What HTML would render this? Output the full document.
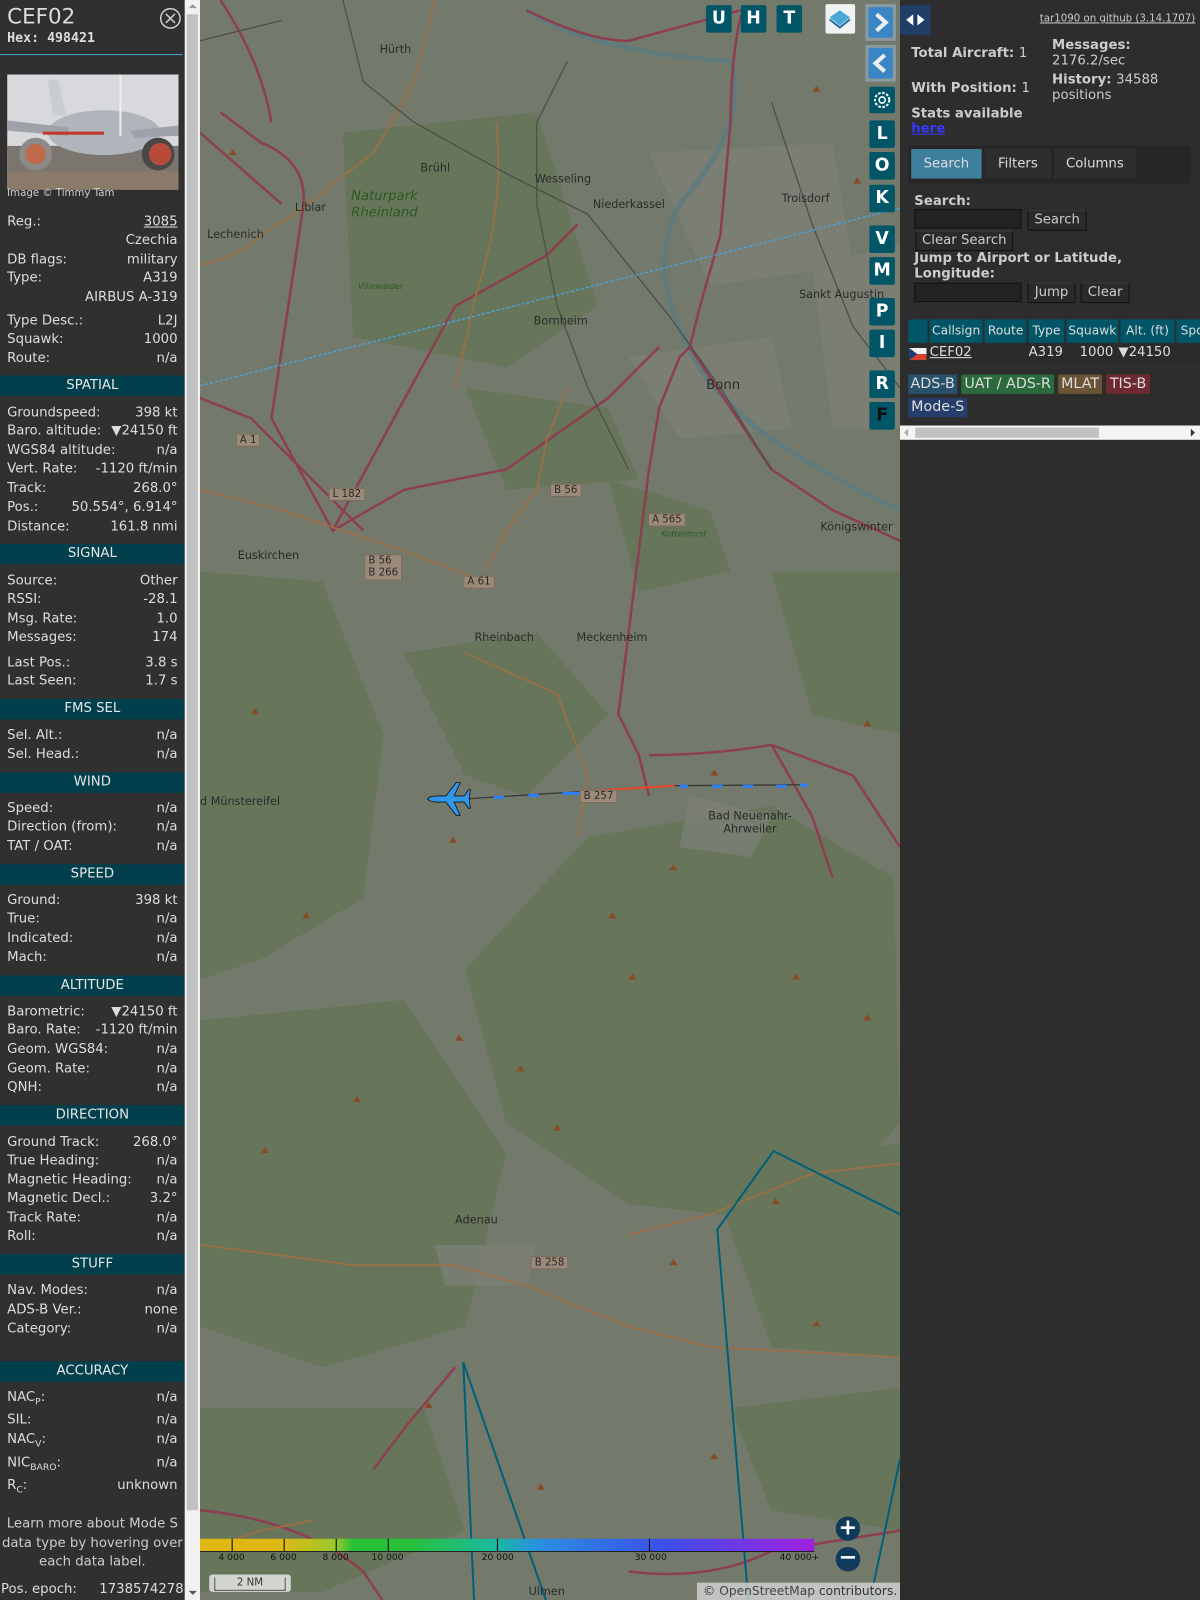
<!DOCTYPE html>
<html><head><meta charset="utf-8">
<style>
*{margin:0;padding:0;box-sizing:border-box}
body{width:1200px;height:1600px;overflow:hidden;background:#2e2e2e;font-family:"DejaVu Sans","Liberation Sans",sans-serif;color:#ddd;position:relative}
#w{position:absolute;left:0;top:0;width:1176px;height:1568px;transform:scale(1.020408);transform-origin:0 0}
.lp{position:absolute;left:0;top:0;width:181px;height:1568px;background:#303030}
.r{position:absolute;left:7px;width:167px;height:18px;line-height:18px;font-size:13px;color:#ddd;white-space:nowrap}
.r .v{position:absolute;right:0;top:0}
.h{position:absolute;left:0;width:181px;height:20px;line-height:20px;background:#003f4b;text-align:center;font-size:13px;color:#e6e6e6}
.sb{position:absolute;left:181px;top:0;width:15px;height:1568px;background:#f1f1f1}
.map{position:absolute;left:196px;top:0;width:686px;height:1568px;background:#737a6b;overflow:hidden}
.btn{position:absolute;width:25px;height:27px;background:#005566;border-radius:2px;color:#fff;font-weight:bold;font-size:17px;text-align:center;line-height:27px}
.rp{position:absolute;left:882px;top:0;width:294px;height:1568px;background:#2d2d2d;overflow:hidden}
.b{font-weight:bold;font-size:13px;color:#ccc;position:absolute}
.inp{position:absolute;background:#232323;border:1px solid #111;height:19px}
.pb{position:absolute;background:#2a2a2a;border:1px solid #111;border-top-color:#3a3a3a;height:20px;font-size:13px;line-height:18px;color:#ccc;text-align:center}
.th{position:absolute;top:313px;height:23px;background:#005566;color:#ddd;font-size:12px;line-height:23px;text-align:center}
.tag{position:absolute;height:19px;line-height:19px;font-size:14px;color:#ddd;text-align:center;white-space:nowrap}
.ml{position:absolute;font-size:11px;color:#2a2a2a;white-space:nowrap}
</style></head><body>
<div id="w">
<div class="lp">
  <div style="position:absolute;left:7px;top:4px;font-size:21px;color:#ddd">CEF02</div>
  <div style="position:absolute;left:7px;top:30px;font-size:13px;font-weight:bold;color:#ddd;font-family:'DejaVu Sans Mono','Liberation Mono',monospace">Hex: 498421</div>
  <svg style="position:absolute;left:156px;top:7px" width="22" height="22"><circle cx="11" cy="11" r="9.5" fill="none" stroke="#ccc" stroke-width="1.5"/><path d="M6.5 6.5L15.5 15.5M15.5 6.5L6.5 15.5" stroke="#ccc" stroke-width="1.5"/></svg>
  <div style="position:absolute;left:0;top:53px;width:179px;height:1px;background:#3fa9d6"></div>
  <svg style="position:absolute;left:7px;top:73px" width="168" height="113">
    <rect width="168" height="113" fill="#d8d9dc"/>
    <rect y="70" width="168" height="43" fill="#7b7570"/>
    <rect y="95" width="168" height="18" fill="#8a7a6a"/>
    <path d="M40 5L50 5L58 40L45 40Z" fill="#c9ccd2"/>
    <ellipse cx="95" cy="57" rx="55" ry="22" fill="#b0b4bb"/>
    <path d="M0 45L60 52L60 60L0 55Z" fill="#9ea2a8"/>
    <path d="M120 55L168 50L168 60L125 62Z" fill="#9ea2a8"/>
    <rect x="35" y="56" width="60" height="3" fill="#c0392b"/>
    <circle cx="28" cy="78" r="16" fill="#8d8b8a"/><circle cx="28" cy="78" r="10" fill="#c06a4a"/>
    <circle cx="148" cy="78" r="16" fill="#4a4748"/><circle cx="150" cy="78" r="11" fill="#b84a3a"/>
    <rect x="110" y="0" width="2" height="60" fill="#eee"/>
  </svg>
  <div style="position:absolute;left:7px;top:184px;font-size:10px;color:#ccc">Image © Timmy Tam</div>

  <div class="r" style="top:209px">Reg.:<span class="v" style="text-decoration:underline">3085</span></div>
  <div class="r" style="top:227px"><span class="v">Czechia</span></div>
  <div class="r" style="top:246px">DB flags:<span class="v">military</span></div>
  <div class="r" style="top:264px">Type:<span class="v">A319</span></div>
  <div class="r" style="top:283px"><span class="v">AIRBUS A-319</span></div>
  <div class="r" style="top:306px">Type Desc.:<span class="v">L2J</span></div>
  <div class="r" style="top:324px">Squawk:<span class="v">1000</span></div>
  <div class="r" style="top:343px">Route:<span class="v">n/a</span></div>
  <div class="h" style="top:368px">SPATIAL</div>
  <div class="r" style="top:396px">Groundspeed:<span class="v">398 kt</span></div>
  <div class="r" style="top:414px">Baro. altitude:<span class="v">▼24150 ft</span></div>
  <div class="r" style="top:433px">WGS84 altitude:<span class="v">n/a</span></div>
  <div class="r" style="top:451px">Vert. Rate:<span class="v">-1120 ft/min</span></div>
  <div class="r" style="top:470px">Track:<span class="v">268.0°</span></div>
  <div class="r" style="top:489px">Pos.:<span class="v">50.554°, 6.914°</span></div>
  <div class="r" style="top:508px">Distance:<span class="v">161.8 nmi</span></div>
  <div class="h" style="top:533px">SIGNAL</div>
  <div class="r" style="top:561px">Source:<span class="v">Other</span></div>
  <div class="r" style="top:579px">RSSI:<span class="v">-28.1</span></div>
  <div class="r" style="top:598px">Msg. Rate:<span class="v">1.0</span></div>
  <div class="r" style="top:616px">Messages:<span class="v">174</span></div>
  <div class="r" style="top:641px">Last Pos.:<span class="v">3.8 s</span></div>
  <div class="r" style="top:659px">Last Seen:<span class="v">1.7 s</span></div>
  <div class="h" style="top:685px">FMS SEL</div>
  <div class="r" style="top:712px">Sel. Alt.:<span class="v">n/a</span></div>
  <div class="r" style="top:731px">Sel. Head.:<span class="v">n/a</span></div>
  <div class="h" style="top:757px">WIND</div>
  <div class="r" style="top:784px">Speed:<span class="v">n/a</span></div>
  <div class="r" style="top:802px">Direction (from):<span class="v">n/a</span></div>
  <div class="r" style="top:821px">TAT / OAT:<span class="v">n/a</span></div>
  <div class="h" style="top:847px">SPEED</div>
  <div class="r" style="top:874px">Ground:<span class="v">398 kt</span></div>
  <div class="r" style="top:892px">True:<span class="v">n/a</span></div>
  <div class="r" style="top:911px">Indicated:<span class="v">n/a</span></div>
  <div class="r" style="top:930px">Mach:<span class="v">n/a</span></div>
  <div class="h" style="top:956px">ALTITUDE</div>
  <div class="r" style="top:983px">Barometric:<span class="v">▼24150 ft</span></div>
  <div class="r" style="top:1001px">Baro. Rate:<span class="v">-1120 ft/min</span></div>
  <div class="r" style="top:1020px">Geom. WGS84:<span class="v">n/a</span></div>
  <div class="r" style="top:1039px">Geom. Rate:<span class="v">n/a</span></div>
  <div class="r" style="top:1057px">QNH:<span class="v">n/a</span></div>
  <div class="h" style="top:1083px">DIRECTION</div>
  <div class="r" style="top:1111px">Ground Track:<span class="v">268.0°</span></div>
  <div class="r" style="top:1129px">True Heading:<span class="v">n/a</span></div>
  <div class="r" style="top:1148px">Magnetic Heading:<span class="v">n/a</span></div>
  <div class="r" style="top:1166px">Magnetic Decl.:<span class="v">3.2°</span></div>
  <div class="r" style="top:1185px">Track Rate:<span class="v">n/a</span></div>
  <div class="r" style="top:1203px">Roll:<span class="v">n/a</span></div>
  <div class="h" style="top:1229px">STUFF</div>
  <div class="r" style="top:1256px">Nav. Modes:<span class="v">n/a</span></div>
  <div class="r" style="top:1275px">ADS-B Ver.:<span class="v">none</span></div>
  <div class="r" style="top:1294px">Category:<span class="v">n/a</span></div>
  <div class="h" style="top:1334px">ACCURACY</div>
  <div class="r" style="top:1361px">NAC<sub style="font-size:9px">P</sub>:<span class="v">n/a</span></div>
  <div class="r" style="top:1383px">SIL:<span class="v">n/a</span></div>
  <div class="r" style="top:1402px">NAC<sub style="font-size:9px">V</sub>:<span class="v">n/a</span></div>
  <div class="r" style="top:1425px">NIC<sub style="font-size:9px">BARO</sub>:<span class="v">n/a</span></div>
  <div class="r" style="top:1447px">R<sub style="font-size:9px">C</sub>:<span class="v">unknown</span></div>
  <div style="position:absolute;left:0;top:1485px;width:181px;text-align:center;font-size:13px;line-height:18.5px;color:#ccc">Learn more about Mode S data type by hovering over each data label.</div>
  <div class="r" style="top:1549px;left:1px;width:179px">Pos. epoch:<span class="v">1738574278</span></div>
</div>
<div class="sb">
  <div style="position:absolute;left:2px;top:14px;width:11px;height:1466px;background:#c1c1c1"></div>
  <div style="position:absolute;left:4px;top:4px;width:0;height:0;border-left:4px solid transparent;border-right:4px solid transparent;border-bottom:4px solid #999"></div>
  <div style="position:absolute;left:4px;top:1559px;width:0;height:0;border-left:4px solid transparent;border-right:4px solid transparent;border-top:4px solid #555"></div>
</div>

<div class="map">
<svg width="686" height="1568" style="position:absolute;left:0;top:0">
  <g fill="#66755a" opacity="0.9">
    <path d="M140 130L330 110L390 300L300 360L150 330Z"/>
    <path d="M200 640L330 620L400 700L320 780L260 760L230 700Z"/>
    <path d="M400 470L500 500L520 560L430 580Z"/>
    <path d="M0 560L120 570L180 720L160 880L60 940L0 960Z"/>
    <path d="M380 820L560 790L680 860L686 1100L600 1200L420 1180L300 1100L260 950Z"/>
    <path d="M0 1000L200 980L300 1130L260 1300L120 1340L0 1300Z"/>
    <path d="M500 1150L686 1120L686 1330L560 1320Z"/>
    <path d="M0 1380L220 1380L260 1500L120 1560L0 1560Z"/>
    <path d="M520 1380L686 1360L686 1500L560 1480Z"/>
    <path d="M260 380L400 400L430 470L300 480Z"/>
    <path d="M560 560L686 560L686 720L600 700Z"/>
  </g>
  <g fill="#7c7f76" opacity="0.8">
    <path d="M440 150L620 140L640 260L500 280Z"/>
    <path d="M420 350L560 330L580 420L470 430Z"/>
    <path d="M600 260L686 240L686 420L620 420Z"/>
    <path d="M480 780L560 800L540 840L470 830Z"/>
    <path d="M230 1220L330 1220L320 1260L240 1260Z"/>
  </g>
  <path d="M320 10Q380 50 520 60Q540 120 470 200Q440 260 470 320Q490 380 560 430Q620 470 686 500" stroke="#5d7a80" stroke-width="5" fill="none" opacity="0.8"/>
  <g stroke="#8d3f52" stroke-width="2.5" fill="none">
    <path d="M20 110L60 140Q110 160 100 210L70 410"/>
    <path d="M20 0Q60 60 70 120"/>
    <path d="M0 130L80 200"/>
    <path d="M0 390L50 410L100 460L160 520"/>
    <path d="M320 10Q380 40 420 40L530 10"/>
    <path d="M530 15Q520 60 520 120L510 230L490 300L480 340L520 400L560 460L620 500L686 530"/>
    <path d="M70 410L130 520L250 300L340 250L370 220"/>
    <path d="M130 520L200 480L300 460L400 390L450 340"/>
    <path d="M480 340L470 350L450 400L440 460L430 540L420 620L410 700L420 720L430 740L440 780"/>
    <path d="M440 740Q500 740 560 730L640 760L686 830"/>
    <path d="M560 730L600 800L620 860"/>
    <path d="M0 1480Q100 1490 160 1540L200 1600"/>
    <path d="M420 1540Q500 1550 560 1520L686 1500"/>
    <path d="M250 1340L200 1400L170 1440"/>
  </g>
  <g stroke="#a06f44" stroke-width="1.6" fill="none">
    <path d="M0 260Q40 250 60 230Q110 200 130 180L170 150L210 80L230 0"/>
    <path d="M290 120Q300 200 270 290L250 380"/>
    <path d="M360 380L340 430L330 480L300 520L280 560"/>
    <path d="M0 480L80 500Q140 520 200 540L280 570"/>
    <path d="M260 640L350 680L380 760L370 820"/>
    <path d="M0 1220Q80 1230 150 1240L250 1240L320 1260L420 1300L500 1320L686 1330"/>
    <path d="M420 1210L500 1190L600 1150L686 1140"/>
    <path d="M0 1520L60 1500L110 1490"/>
  </g>
  <g stroke="#4b4d48" stroke-width="1.2" fill="none">
    <path d="M140 0L160 80L210 120L300 170L380 210L460 310L510 380L560 460"/>
    <path d="M0 40L80 20"/>
    <path d="M360 60L330 120L330 200L350 300L380 380L420 460"/>
    <path d="M560 100L600 220L640 320L686 380"/>
  </g>
  <path d="M0 378L686 204" stroke="#3fa9f5" stroke-width="1.2" stroke-dasharray="3 2" fill="none"/>
  <g stroke="#00607a" stroke-width="2" fill="none">
    <path d="M686 1190L562 1128L507 1205L540 1600"/>
    <path d="M258 1335L350 1600"/>
    <path d="M258 1335L270 1600"/>
    <path d="M686 1430L650 1600"/>
  </g>
  <path d="M243 784L385 775" stroke="#3a3a3a" stroke-width="1.3"/>
  <path d="M385 775L465 770" stroke="#e8452a" stroke-width="2"/>
  <path d="M465 770L595 769" stroke="#3a3a3a" stroke-width="1.3"/>
  <g fill="#2a7fff"><rect x="288" y="780" width="10" height="3"/><rect x="322" y="778" width="10" height="3"/><rect x="355" y="776" width="30" height="3"/><rect x="470" y="769" width="8" height="3"/><rect x="502" y="769" width="10" height="3"/><rect x="532" y="769" width="10" height="3"/><rect x="565" y="769" width="10" height="3"/><rect x="588" y="768" width="8" height="3"/></g>
  <g transform="translate(245,783)" fill="#2f96e8" stroke="#111" stroke-width="0.8">
    <path d="M-22 0Q-20 -3 -12 -3L-4 -3L6 -16L10 -16L4 -3L14 -3L18 -9L20 -9L19 -2L19 2L20 9L18 9L14 3L4 3L10 16L6 16L-4 3L-12 3Q-20 3 -22 0Z"/>
  </g>
  <g fill="#8a4a26">
    <path d="M28 152l4 -6l4 6z"/><path d="M244 826l4 -6l4 6z"/><path d="M346 1108l4 -6l4 6z"/>
    <path d="M460 853l4 -6l4 6z"/><path d="M500 760l4 -6l4 6z"/><path d="M650 712l4 -6l4 6z"/>
    <path d="M150 1080l4 -6l4 6z"/><path d="M250 1020l4 -6l4 6z"/><path d="M310 1050l4 -6l4 6z"/>
    <path d="M400 900l4 -6l4 6z"/><path d="M420 960l4 -6l4 6z"/><path d="M560 1180l4 -6l4 6z"/>
    <path d="M460 1240l4 -6l4 6z"/><path d="M600 1300l4 -6l4 6z"/><path d="M220 1380l4 -6l4 6z"/>
    <path d="M100 900l4 -6l4 6z"/><path d="M60 1130l4 -6l4 6z"/><path d="M50 700l4 -6l4 6z"/>
    <path d="M330 1460l4 -6l4 6z"/><path d="M500 1430l4 -6l4 6z"/><path d="M650 1000l4 -6l4 6z"/>
    <path d="M640 180l4 -6l4 6z"/><path d="M600 90l4 -6l4 6z"/><path d="M580 960l4 -6l4 6z"/>
  </g>
</svg>
  <div class="ml" style="left:176px;top:42px">Hürth</div>
  <div class="ml" style="left:93px;top:197px">Liblar</div>
  <div class="ml" style="left:7px;top:223px">Lechenich</div>
  <div class="ml" style="left:216px;top:158px">Brühl</div>
  <div class="ml" style="left:328px;top:169px">Wesseling</div>
  <div class="ml" style="left:385px;top:194px">Niederkassel</div>
  <div class="ml" style="left:327px;top:308px">Bornheim</div>
  <div class="ml" style="left:570px;top:188px">Troisdorf</div>
  <div class="ml" style="left:587px;top:282px">Sankt Augustin</div>
  <div class="ml" style="left:496px;top:370px;font-size:13px">Bonn</div>
  <div class="ml" style="left:37px;top:538px">Euskirchen</div>
  <div class="ml" style="left:269px;top:618px">Rheinbach</div>
  <div class="ml" style="left:369px;top:618px">Meckenheim</div>
  <div class="ml" style="left:0px;top:779px">d Münstereifel</div>
  <div class="ml" style="left:498px;top:793px;text-align:center">Bad Neuenahr-<br>Ahrweiler</div>
  <div class="ml" style="left:608px;top:510px">Königswinter</div>
  <div class="ml" style="left:250px;top:1189px">Adenau</div>
  <div class="ml" style="left:322px;top:1553px">Ulmen</div>
  <div class="ml" style="left:148px;top:185px;color:#2a5a22;font-size:13px;font-style:italic;text-align:center;line-height:16px">Naturpark<br>Rheinland</div>
  <div class="ml" style="left:155px;top:276px;color:#2a5a22;font-size:8px;font-style:italic">Villewälder</div>
  <div class="ml" style="left:452px;top:519px;color:#2a5a22;font-size:8px;font-style:italic">Kottenforst</div>
  <div class="ml" style="left:35px;top:425px;background:#9b8a79;border:1px solid #7a6a5a;padding:0 3px;font-size:10px">A 1</div>
  <div class="ml" style="left:126px;top:478px;background:#9b8a79;border:1px solid #7a6a5a;padding:0 3px;font-size:10px">L 182</div>
  <div class="ml" style="left:343px;top:474px;background:#9b8a79;border:1px solid #7a6a5a;padding:0 3px;font-size:10px">B 56</div>
  <div class="ml" style="left:439px;top:503px;background:#9b8a79;border:1px solid #7a6a5a;padding:0 3px;font-size:10px">A 565</div>
  <div class="ml" style="left:161px;top:543px;background:#9b8a79;border:1px solid #7a6a5a;padding:0 3px;font-size:10px;line-height:12px">B 56<br>B 266</div>
  <div class="ml" style="left:258px;top:564px;background:#9b8a79;border:1px solid #7a6a5a;padding:0 3px;font-size:10px">A 61</div>
  <div class="ml" style="left:372px;top:774px;background:#9b8a79;border:1px solid #7a6a5a;padding:0 3px;font-size:10px">B 257</div>
  <div class="ml" style="left:324px;top:1231px;background:#9b8a79;border:1px solid #7a6a5a;padding:0 3px;font-size:10px">B 258</div>

  <div style="position:absolute;left:0;top:1508px;width:602px;height:12px;background:linear-gradient(90deg,#e0b814 0%,#e0b814 13%,#9ac82a 22%,#28c038 25%,#28c038 34%,#1abaa0 48%,#2a90e0 55%,#3a50e8 75%,#a020e0 100%)"></div>
  <div style="position:absolute;left:0;top:1520px;width:602px;height:1px;background:#222"></div>
  <div style="position:absolute;left:31px;top:1508px;width:1px;height:12px;background:#000"></div>
  <div style="position:absolute;left:82px;top:1508px;width:1px;height:12px;background:#000"></div>
  <div style="position:absolute;left:133px;top:1508px;width:1px;height:12px;background:#000"></div>
  <div style="position:absolute;left:184px;top:1508px;width:1px;height:12px;background:#000"></div>
  <div style="position:absolute;left:291px;top:1508px;width:1px;height:12px;background:#000"></div>
  <div style="position:absolute;left:440px;top:1508px;width:1px;height:12px;background:#000"></div>
  <div class="ml" style="left:18px;top:1522px;font-size:9px;color:#111">4 000</div>
  <div class="ml" style="left:69px;top:1522px;font-size:9px;color:#111">6 000</div>
  <div class="ml" style="left:120px;top:1522px;font-size:9px;color:#111">8 000</div>
  <div class="ml" style="left:168px;top:1522px;font-size:9px;color:#111">10 000</div>
  <div class="ml" style="left:276px;top:1522px;font-size:9px;color:#111">20 000</div>
  <div class="ml" style="left:426px;top:1522px;font-size:9px;color:#111">30 000</div>
  <div class="ml" style="left:568px;top:1522px;font-size:9px;color:#111">40 000+</div>
  <div style="position:absolute;left:9px;top:1543px;width:80px;height:17px;background:rgba(230,230,230,0.85);border-radius:3px;font-size:10px;color:#333;text-align:center;line-height:17px"><span style="display:inline-block;border:1px solid #555;border-top:none;width:70px;line-height:12px">2 NM</span></div>
  <div style="position:absolute;left:623px;top:1486px;width:24px;height:24px;border-radius:50%;background:#0f3a5a;color:#fff;font-size:22px;line-height:23px;text-align:center;font-weight:bold">+</div>
  <div style="position:absolute;left:623px;top:1516px;width:24px;height:24px;border-radius:50%;background:#0f3a5a;color:#fff;font-size:22px;line-height:22px;text-align:center;font-weight:bold">−</div>
  <div style="position:absolute;left:487px;top:1551px;width:199px;height:17px;background:rgba(220,220,220,0.75);font-size:12px;color:#333;line-height:17px;padding-left:6px">© <span style="color:#444">OpenStreetMap</span> contributors.</div>

  <div class="btn" style="left:496px;top:5px">U</div>
  <div class="btn" style="left:530px;top:5px">H</div>
  <div class="btn" style="left:565px;top:5px">T</div>
  <div style="position:absolute;left:613px;top:4px;width:29px;height:29px;background:#f2f2f2;border-radius:2px"><svg width="29" height="29"><path d="M14 6L24 13L14 21L4 13Z" fill="#4aa8d6"/><path d="M4 15L14 23L24 15" fill="none" stroke="#2a6ea0" stroke-width="2"/></svg></div>
  <div style="position:absolute;left:652px;top:4px;width:30px;height:36px;background:#8a9aa0;padding:3px"><div style="width:24px;height:30px;background:#3a86c4;border-radius:2px"><svg width="24" height="30"><path d="M8 7L17 15L8 23" stroke="#eee" stroke-width="4" fill="none"/></svg></div></div>
  <div style="position:absolute;left:652px;top:44px;width:30px;height:36px;background:#8a9aa0;padding:3px"><div style="width:24px;height:30px;background:#3a86c4;border-radius:2px"><svg width="24" height="30"><path d="M16 7L7 15L16 23" stroke="#eee" stroke-width="4" fill="none"/></svg></div></div>
  <div class="btn" style="left:656px;top:85px;height:26px"><svg width="25" height="26"><circle cx="12.5" cy="13" r="3" fill="none" stroke="#fff" stroke-width="1.5"/><circle cx="12.5" cy="13" r="7" fill="none" stroke="#fff" stroke-width="2" stroke-dasharray="2.5 1.6"/></svg></div>
  <div class="btn" style="left:656px;top:118px">L</div>
  <div class="btn" style="left:656px;top:149px">O</div>
  <div class="btn" style="left:656px;top:181px">K</div>
  <div class="btn" style="left:656px;top:221px">V</div>
  <div class="btn" style="left:656px;top:252px">M</div>
  <div class="btn" style="left:656px;top:292px">P</div>
  <div class="btn" style="left:656px;top:323px">I</div>
  <div class="btn" style="left:656px;top:363px">R</div>
  <div class="btn" style="left:656px;top:394px;color:#111">F</div>
</div>

<div class="rp">
  <div style="position:absolute;left:0;top:5px;width:30px;height:29px;background:#1f3d66"><svg width="30" height="29"><path d="M6 14.5L13 9L13 20Z" fill="#fff"/><path d="M24 14.5L17 9L17 20Z" fill="#fff"/></svg></div>
  <div style="position:absolute;left:137px;top:13px;font-size:10px;color:#ccc;text-decoration:underline;white-space:nowrap">tar1090 on github (3.14.1707)</div>
  <div class="b" style="left:11px;top:45px">Total Aircraft: <span style="font-weight:normal">1</span></div>
  <div class="b" style="left:11px;top:79px">With Position: <span style="font-weight:normal">1</span></div>
  <div class="b" style="left:11px;top:104px;line-height:15px">Stats available<br><span style="color:#3838ff;text-decoration:underline">here</span></div>
  <div class="b" style="left:149px;top:37px;line-height:15px">Messages:<br><span style="font-weight:normal">2176.2/sec</span></div>
  <div class="b" style="left:149px;top:71px;line-height:15px">History: <span style="font-weight:normal">34588<br>positions</span></div>
  <div style="position:absolute;left:8px;top:143px;width:277px;height:37px;background:#262626"></div>
  <div style="position:absolute;left:11px;top:146px;width:69px;height:29px;background:#3f7f9e;font-size:13px;line-height:29px;text-align:center;color:#ddd">Search</div>
  <div style="position:absolute;left:83px;top:146px;width:65px;height:29px;background:#2e2e2e;font-size:13px;line-height:29px;text-align:center;color:#ddd">Filters</div>
  <div style="position:absolute;left:151px;top:146px;width:80px;height:29px;background:#2e2e2e;font-size:13px;line-height:29px;text-align:center;color:#ddd">Columns</div>
  <div class="b" style="left:14px;top:190px">Search:</div>
  <div class="inp" style="left:14px;top:205px;width:105px"></div>
  <div class="pb" style="left:125px;top:206px;width:58px">Search</div>
  <div class="pb" style="left:15px;top:226px;width:96px">Clear Search</div>
  <div class="b" style="left:14px;top:246px;line-height:15px">Jump to Airport or Latitude,<br>Longitude:</div>
  <div class="inp" style="left:14px;top:277px;width:105px"></div>
  <div class="pb" style="left:125px;top:277px;width:47px">Jump</div>
  <div class="pb" style="left:177px;top:277px;width:48px">Clear</div>
  <div class="th" style="left:8px;width:19px"></div>
  <div class="th" style="left:29px;width:52px">Callsign</div>
  <div class="th" style="left:83px;width:41px">Route</div>
  <div class="th" style="left:126px;width:35px">Type</div>
  <div class="th" style="left:163px;width:51px">Squawk</div>
  <div class="th" style="left:216px;width:53px">Alt. (ft)</div>
  <div class="th" style="left:271px;width:47px;text-align:left;padding-left:4px">Spd</div>
  <div style="position:absolute;left:8px;top:337px;width:310px;height:19px;background:#2b2b2b"></div>
  <svg style="position:absolute;left:9px;top:341px" width="17" height="12"><rect width="17" height="6" fill="#f2f2f2"/><rect y="6" width="17" height="6" fill="#d7412c"/><path d="M0 0L8 6L0 12Z" fill="#1a3a7a"/></svg>
  <div style="position:absolute;left:29px;top:338px;font-size:13px;color:#ddd;text-decoration:underline">CEF02</div>
  <div style="position:absolute;left:126px;top:338px;font-size:13px;color:#ddd">A319</div>
  <div style="position:absolute;left:176px;top:338px;font-size:13px;color:#ddd">1000</div>
  <div style="position:absolute;left:214px;top:338px;font-size:13px;color:#ddd">▼24150</div>
  <div class="tag" style="left:8px;top:367px;width:48px;background:#27506a">ADS-B</div>
  <div class="tag" style="left:60px;top:367px;width:91px;background:#2b6a3c">UAT / ADS-R</div>
  <div class="tag" style="left:155px;top:367px;width:43px;background:#6b5436">MLAT</div>
  <div class="tag" style="left:202px;top:367px;width:43px;background:#6e2a30">TIS-B</div>
  <div class="tag" style="left:8px;top:390px;width:58px;background:#263e6c">Mode-S</div>
  <div style="position:absolute;left:0;top:417px;width:294px;height:14px;background:#f4f4f4"></div>
  <div style="position:absolute;left:15px;top:419px;width:180px;height:10px;background:#c1c1c1"></div>
  <div style="position:absolute;left:4px;top:420px;width:0;height:0;border-top:4px solid transparent;border-bottom:4px solid transparent;border-right:4px solid #aaa"></div>
  <div style="position:absolute;left:285px;top:420px;width:0;height:0;border-top:4px solid transparent;border-bottom:4px solid transparent;border-left:4px solid #333"></div>
</div>
</div>
</body></html>
